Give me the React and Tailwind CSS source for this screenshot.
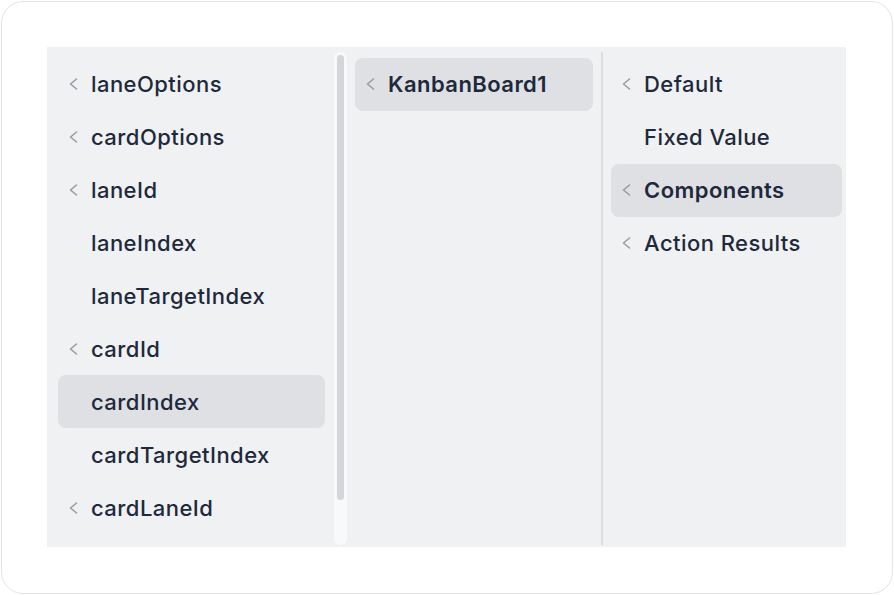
import React from 'react';

const Chevron = () => (
  <svg width="10" height="12" viewBox="0 0 10 12" className="shrink-0">
    <polyline points="7.5,1 1.5,6 7.5,11" fill="none" stroke="#9a9ca3" strokeWidth="1.6" strokeLinecap="round" strokeLinejoin="round" />
  </svg>
);

const Row = ({ label, chevron, active, bold }) => (
  <div
    className={`h-[52.9px] shrink-0 flex items-center rounded-[8px] pl-[11px] ${active ? 'bg-[#dfe0e4]' : ''}`}
  >
    <div className="w-[10px] mr-[12px] flex items-center">{chevron && <Chevron />}</div>
    <span className={`text-[22px] leading-none text-[#1e293b] tracking-[0.45px] ${bold ? 'font-semibold' : 'font-medium'}`}>
      {label}
    </span>
  </div>
);

const fields = [
  { label: 'laneOptions', chevron: true },
  { label: 'cardOptions', chevron: true },
  { label: 'laneId', chevron: true },
  { label: 'laneIndex' },
  { label: 'laneTargetIndex' },
  { label: 'cardId', chevron: true },
  { label: 'cardIndex', active: true },
  { label: 'cardTargetIndex' },
  { label: 'cardLaneId', chevron: true },
];

const sources = [
  { label: 'Default', chevron: true },
  { label: 'Fixed Value' },
  { label: 'Components', chevron: true, active: true, bold: true },
  { label: 'Action Results', chevron: true },
];

export default function App() {
  return (
    <div className="w-[894px] h-[595px] bg-white p-[1px]" style={{ fontFamily: 'Inter, "Noto Sans", sans-serif' }}>
      <div className="w-full h-full border-[1.5px] border-[#e2e4e8] rounded-[22px] pt-[45px] pl-[45px]">
        <div className="w-[799px] h-[500px] bg-[#f0f1f3] flex pt-[5px] pb-[2px] overflow-hidden">
          {/* fields column */}
          <div className="w-[287px] pl-[11px] pr-[9px] pt-[6px] flex flex-col">
            {fields.map((f) => (
              <Row key={f.label} {...f} />
            ))}
          </div>
          {/* scrollbar */}
          <div className="w-[13px] bg-[#f8f9fa] rounded-[6px] pt-[3px] px-[3px]">
            <div className="h-[445px] bg-[#d5d6da] rounded-full" />
          </div>
          {/* component column */}
          <div className="w-[254px] px-[8px] pt-[6px]">
            <Row label="KanbanBoard1" chevron active bold />
          </div>
          <div className="w-[2px] bg-[#dcdde1]" />
          {/* source column */}
          <div className="flex-1 pl-[8px] pr-[4px] pt-[6px] flex flex-col">
            {sources.map((s) => (
              <Row key={s.label} {...s} />
            ))}
          </div>
        </div>
      </div>
    </div>
  );
}
